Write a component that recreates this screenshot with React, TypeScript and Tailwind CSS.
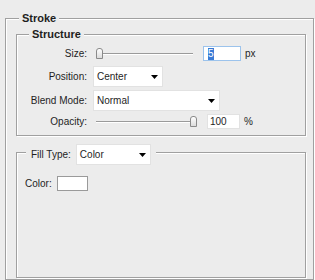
import React from "react";

const Arrow = () => (
  <svg width="7" height="4" viewBox="0 0 7 4" className="block">
    <polygon points="0,0 7,0 3.5,4" fill="#000" />
  </svg>
);

const Thumb = ({ left }: { left: string }) => (
  <div
    className={`absolute top-0 ${left} w-[7px] h-[11px] rounded-t-[3px] border border-[#8a8a8a] bg-gradient-to-b from-[#ffffff] to-[#dcdcdc]`}
  />
);

const Select = ({ w, text }: { w: string; text: string }) => (
  <div
    className={`${w} h-[21px] bg-white border border-[#e2e2e2] flex items-center justify-between pl-[3px] pr-[4px]`}
  >
    <span>{text}</span>
    <Arrow />
  </div>
);

export default function App() {
  const fs =
    "border border-[#a0a0a0] shadow-[1px_1px_0_#ffffff,inset_1px_1px_0_#ffffff]";
  return (
    <div className="w-[315px] h-[280px] overflow-hidden bg-[#ececec] pl-[5px] pr-[1px] pt-[12px] font-['Liberation_Sans',Arial,sans-serif] text-[10px] leading-[12px] text-[#1e1e1e]">
      <fieldset className={`${fs} pb-[1px]`}>
        <legend className="ml-[13px] px-[3px] bg-[#ececec] text-[11px] leading-[13px] font-bold">
          Stroke
        </legend>

        <fieldset className={`${fs} ml-[10px] mr-[7px] mt-[3px] pt-[5px] pb-[6px]`}>
          <legend className="ml-[12px] px-[3px] bg-[#ececec] text-[11px] leading-[13px] font-bold">
            Structure
          </legend>

          {/* Size */}
          <div className="flex items-center h-[15px]">
            <div className="w-[70px] text-right">Size:</div>
            <div className="ml-[9px] relative w-[97px] h-[11px]">
              <div className="absolute left-[2px] right-0 top-[5px] h-[2px] border-t border-[#9a9a9a] border-b border-b-white" />
              <Thumb left="left-0" />
            </div>
            <div className="ml-[10px] w-[38px] h-[15px] bg-white border border-[#9cc3ec] flex items-center pl-[4px]">
              <span className="bg-[#3a7bd5] text-white px-[0px] leading-[12px]">5</span>
            </div>
            <span className="ml-[4px]">px</span>
          </div>

          {/* Position */}
          <div className="flex items-center h-[21px] mt-[5px]">
            <div className="w-[70px] text-right">Position:</div>
            <div className="ml-[6px]">
              <Select w="w-[70px]" text="Center" />
            </div>
          </div>

          {/* Blend Mode */}
          <div className="flex items-center h-[21px] mt-[3px]">
            <div className="w-[70px] text-right">Blend Mode:</div>
            <div className="ml-[6px]">
              <Select w="w-[127px]" text="Normal" />
            </div>
          </div>

          {/* Opacity */}
          <div className="flex items-center h-[15px] mt-[3px]">
            <div className="w-[70px] text-right">Opacity:</div>
            <div className="ml-[9px] relative w-[102px] h-[11px]">
              <div className="absolute left-0 w-[95px] top-[5px] h-[2px] border-t border-[#9a9a9a] border-b border-b-white" />
              <Thumb left="left-[94px]" />
            </div>
            <div className="ml-[9px] w-[33px] h-[15px] bg-white border border-[#e2e2e2] flex items-center pl-[2px]">
              100
            </div>
            <span className="ml-[4px]">%</span>
          </div>
        </fieldset>

        <fieldset className={`${fs} ml-[10px] mr-[7px] mt-[8px]`}>
          <legend className="ml-[9px] px-[5px] bg-[#ececec] h-[17px]">
            <div className="flex items-center h-[21px]">
              <span>Fill Type:</span>
              <div className="ml-[5px]">
                <Select w="w-[75px]" text="Color" />
              </div>
            </div>
          </legend>
          <div className="h-[116px] pt-[15px] pl-[8px]">
            <div className="flex items-center h-[15px]">
              <span>Color:</span>
              <div className="ml-[5px] w-[31px] h-[15px] bg-white border border-[#9a9a9a]" />
            </div>
          </div>
        </fieldset>
      </fieldset>
    </div>
  );
}
